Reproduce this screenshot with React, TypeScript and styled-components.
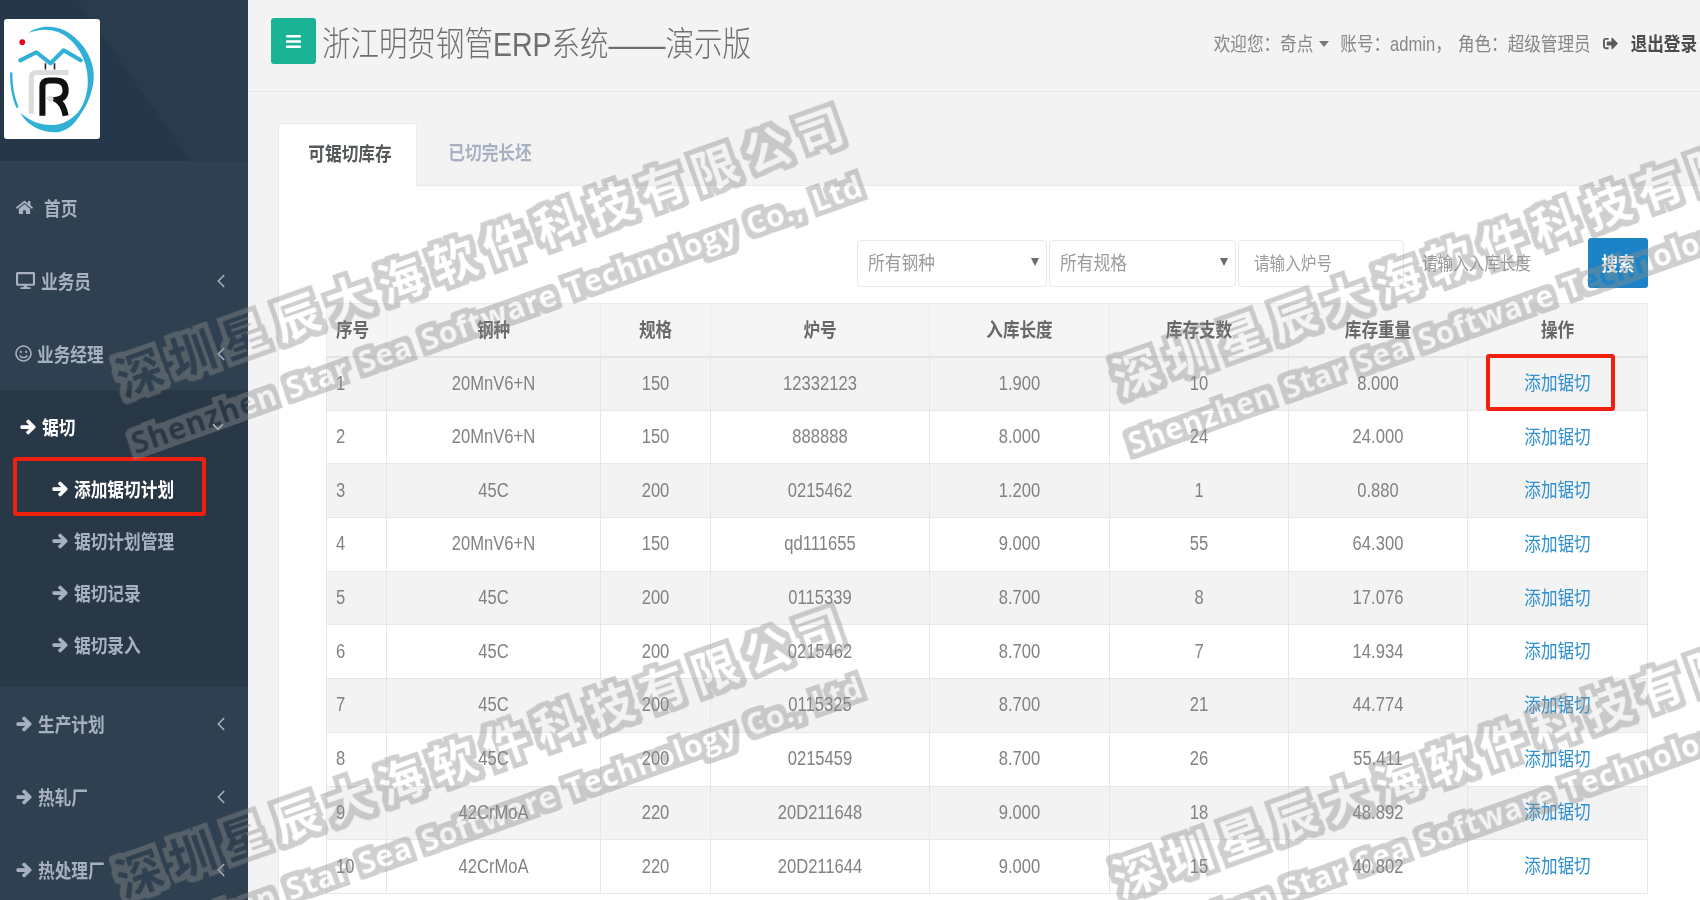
import React from "react";
import styled, { createGlobalStyle } from "styled-components";
import { FaHome, FaDesktop, FaRegSmile, FaArrowRight, FaBars, FaSignOutAlt } from "react-icons/fa";
import { ChevronLeft, ChevronDown } from "lucide-react";

const Global = createGlobalStyle`
  html, body { margin: 0; padding: 0; background: #f3f3f4; overflow: hidden; }
  body { font-family: "Liberation Sans", "Noto Sans CJK SC", sans-serif; color: #676a6c; }
  * { box-sizing: border-box; }
`;

const Page = styled.div`
  position: relative;
  display: flex;
  width: 1700px;
  height: 900px;
  overflow: hidden;
`;

const Txt = styled.span`
  display: inline-block;
  transform: scaleY(1.18);
  white-space: nowrap;
`;

/* Sidebar */
const Sidebar = styled.aside`
  flex: 0 0 248px;
  height: 900px;
  overflow: hidden;
  background: #2f4050;
  display: flex;
  flex-direction: column;
`;
const NavHeader = styled.div`
  height: 161px;
  flex: none;
  padding: 19px 0 0 4px;
  background: linear-gradient(55deg, #26374a 0 52.8%, #2a3c4c 52.8% 100%);
`;
const LogoBox = styled.div`
  width: 96px;
  height: 120px;
  background: #fff;
  border-radius: 3px;
`;
const Nav = styled.nav`
  padding-top: 10px;
  display: flex;
  flex-direction: column;
  flex: none;
`;
const NavItem = styled.div<{ $pad: number; $gap: number; $icon?: number }>`
  height: 73px;
  flex: none;
  display: flex;
  align-items: center;
  gap: ${(p) => p.$gap}px;
  padding-left: ${(p) => p.$pad}px;
  padding-right: 19px;
  color: #a7b1c2;
  font-size: 16.7px;
  font-weight: 700;
  svg { font-size: ${(p) => p.$icon ?? 17}px; flex: none; }
`;
const Chevron = styled.span<{ $down?: boolean }>`
  margin-left: auto;
  margin-right: ${(p) => (p.$down ? 0 : -3)}px;
  display: flex;
  color: ${(p) => (p.$down ? "#c9ced6" : "#a7b1c2")};
`;
const ChunkyArrow = styled(FaArrowRight)`
  stroke: currentColor;
  stroke-width: 40px;
`;
const ActiveGroup = styled.div`
  background: #293846;
  padding-bottom: 16px;
  flex: none;
`;
const ActiveHead = styled.div`
  height: 73px;
  display: flex;
  align-items: center;
  gap: 6px;
  padding: 0 21px 0 20px;
  color: #fff;
  font-size: 16.7px;
  font-weight: 700;
  svg { font-size: 16px; flex: none; }
`;
const SubItem = styled.div<{ $active?: boolean }>`
  position: relative;
  height: 52px;
  display: flex;
  align-items: center;
  gap: 6px;
  padding-left: 52px;
  color: ${(p) => (p.$active ? "#fff" : "#a7b1c2")};
  font-size: 16.7px;
  font-weight: 700;
  svg { font-size: 16px; flex: none; }
`;
const SideMark = styled.span`
  position: absolute;
  left: 13px;
  top: -6px;
  width: 193px;
  height: 59px;
  border: 4px solid #f0200f;
  border-radius: 3px;
`;

/* Main */
const Main = styled.main`
  flex: 1;
  min-width: 0;
  display: flex;
  flex-direction: column;
`;
const TopBar = styled.header`
  height: 92px;
  flex: none;
  border-bottom: 1px solid #e7eaec;
  display: flex;
  align-items: flex-start;
  padding: 18px 3px 0 23px;
`;
const MenuButton = styled.button`
  width: 45px;
  height: 46px;
  border: 0;
  border-radius: 3px;
  background: #1ab394;
  color: #fff;
  font-size: 17px;
  display: flex;
  align-items: center;
  justify-content: center;
  padding: 0;
`;
const Title = styled.h1`
  margin: 0 0 0 6px;
  height: 46px;
  display: flex;
  align-items: center;
  font-size: 28.5px;
  font-weight: 300;
  color: #6d6f71;
`;
const UserInfo = styled.div`
  margin-left: auto;
  height: 50px;
  display: flex;
  align-items: center;
  font-size: 16.6px;
  color: #85878a;
  gap: 6px;
  svg { flex: none; }
`;
const Caret = styled.i`
  width: 0;
  height: 0;
  border-left: 5px solid transparent;
  border-right: 5px solid transparent;
  border-top: 6px solid #787a7c;
  margin: 2px 5px 0 0;
`;
const LogoutIcon = styled.span`
  display: flex;
  color: #5a5c5e;
  font-size: 15px;
  margin: 0 7px 0 6px;
`;
const Logout = styled.span`
  font-weight: 700;
  color: #4a4c4e;
`;

const Content = styled.div`
  flex: 1;
  padding: 31px 0 0 30px;
  display: flex;
  flex-direction: column;
`;
const Tabs = styled.div`
  height: 63px;
  flex: none;
  display: flex;
  border-bottom: 1px solid #e7eaec;
`;
const Tab = styled.div<{ $active?: boolean }>`
  height: ${(p) => (p.$active ? 63 : 62)}px;
  width: ${(p) => (p.$active ? 139 : 146)}px;
  display: flex;
  align-items: center;
  justify-content: center;
  padding: ${(p) => (p.$active ? "0 0 5px 5px" : "0 0 4px")};
  font-size: 16.7px;
  font-weight: 700;
  color: ${(p) => (p.$active ? "#55585a" : "#a7b1c2")};
  background: ${(p) => (p.$active ? "#fff" : "transparent")};
  border: ${(p) => (p.$active ? "1px solid #e7eaec" : "0")};
  border-bottom: 0;
  border-radius: 4px 4px 0 0;
`;
const Panel = styled.section`
  flex: 1;
  background: #fff;
  border-left: 1px solid #e7eaec;
  padding: 52px 52px 0 47px;
`;
const Toolbar = styled.div`
  display: flex;
  justify-content: flex-end;
  align-items: center;
  height: 50px;
  margin-bottom: 15px;
`;
const Field = styled.div<{ $w: number; $bare?: boolean; $select?: boolean }>`
  width: ${(p) => p.$w}px;
  height: 47px;
  margin-right: 2px;
  border: 1px solid ${(p) => (p.$bare ? "transparent" : "#e9e9e9")};
  border-radius: 4px;
  display: flex;
  align-items: center;
  padding: 0 7px 3px ${(p) => (p.$select ? 10 : 15)}px;
  font-size: ${(p) => (p.$select ? 16.8 : 15.6)}px;
  color: #9a9c9e;
  background: #fff;
`;
const Arrow = styled.i`
  margin-left: auto;
  width: 0;
  height: 0;
  border-left: 4px solid transparent;
  border-right: 4px solid transparent;
  border-top: 8px solid #6a6a6a;
`;
const SearchButton = styled.button`
  width: 60px;
  height: 50px;
  margin-left: 8px;
  border: 0;
  border-radius: 3px;
  background: #1c84c6;
  color: #fff;
  font-family: inherit;
  font-size: 16.5px;
  font-weight: 700;
  padding: 0;
`;
const Table = styled.table`
  width: 1321px;
  table-layout: fixed;
  border-collapse: collapse;
  font-size: 16.6px;
`;
const Th = styled.th<{ $left?: boolean }>`
  height: 53px;
  background: #f5f5f6;
  border: 1px solid #ececec;
  border-bottom: 2px solid #e4e4e4;
  font-weight: 700;
  color: #66686a;
  text-align: ${(p) => (p.$left ? "left" : "center")};
  padding: 0 0 2px ${(p) => (p.$left ? 9 : 0)}px;
`;
const Tr = styled.tr<{ $odd: boolean }>`
  background: ${(p) => (p.$odd ? "#f3f3f3" : "#fff")};
`;
const Td = styled.td<{ $left?: boolean }>`
  height: 53.7px;
  border: 1px solid #e7e7e7;
  color: #808284;
  text-align: ${(p) => (p.$left ? "left" : "center")};
  padding: 0 0 0 ${(p) => (p.$left ? 9 : 0)}px;
`;
const ActionTd = styled.td`
  position: relative;
  height: 53.7px;
  border: 1px solid #e7e7e7;
  text-align: center;
  padding: 0 0 3px;
`;
const Link = styled.a`
  color: #2f8fd0;
`;
const CellMark = styled.span`
  position: absolute;
  left: 18px;
  top: -4px;
  width: 129px;
  height: 57px;
  border: 4px solid #f0200f;
  border-radius: 3px;
`;

/* Watermark */
const FilterDefs = styled.svg`
  position: absolute;
  width: 0;
  height: 0;
`;
const Watermark = styled.div<{ $x: number; $y: number }>`
  position: absolute;
  left: ${(p) => p.$x}px;
  top: ${(p) => p.$y}px;
  transform: rotate(-19.6deg);
  transform-origin: 0 0;
  pointer-events: none;
  white-space: nowrap;
  font-weight: 700;
  color: #000;
  filter: url(#wm-halo);
`;
const WmCn = styled.div`
  height: 60px;
  line-height: 60px;
  padding-left: 20px;
  font-size: 46px;
  letter-spacing: 9.5px;
  font-family: "Noto Sans CJK SC", sans-serif;
`;
const WmEn = styled.div`
  height: 45px;
  line-height: 45px;
  margin-top: 15px;
  padding-left: 12px;
  font-size: 30px;
  letter-spacing: 0.9px;
  word-spacing: 3px;
  font-family: "Open Sans", sans-serif;
`;

const cols = [60, 214, 110, 219, 180, 179, 179, 180];
const heads = ["序号", "钢种", "规格", "炉号", "入库长度", "库存支数", "库存重量", "操作"];
const rows = [
  ["1", "20MnV6+N", "150", "12332123", "1.900", "10", "8.000"],
  ["2", "20MnV6+N", "150", "888888", "8.000", "24", "24.000"],
  ["3", "45C", "200", "0215462", "1.200", "1", "0.880"],
  ["4", "20MnV6+N", "150", "qd111655", "9.000", "55", "64.300"],
  ["5", "45C", "200", "0115339", "8.700", "8", "17.076"],
  ["6", "45C", "200", "0215462", "8.700", "7", "14.934"],
  ["7", "45C", "200", "0115325", "8.700", "21", "44.774"],
  ["8", "45C", "200", "0215459", "8.700", "26", "55.411"],
  ["9", "42CrMoA", "220", "20D211648", "9.000", "18", "48.892"],
  ["10", "42CrMoA", "220", "20D211644", "9.000", "15", "40.802"],
];
const marks: [number, number][] = [[88, 356], [1085, 356], [88, 857], [1085, 857]];

const Logo = () => (
  <svg width="96" height="120" viewBox="0 0 95 119" fill="none">
    <path d="M24 14 C34 6 52 5 66 15 C84 28 92 48 88 66 C84 88 70 106 52 113 C72 100 82 84 83 64 C84 44 74 24 58 15 C46 9 34 10 24 14Z" fill="#2fb0d6" />
    <path d="M7 54 C7 68 9 78 13 87" stroke="#2fb0d6" strokeWidth="2.4" strokeLinecap="round" />
    <path d="M16 93 C24 108 42 114 54 112 C66 110 76 98 80 84 C72 96 62 104 50 105 C38 106 26 102 16 93Z" fill="#2fb0d6" />
    <circle cx="18" cy="23" r="2.8" fill="#e8001c" />
    <path d="M16 41 L32 33 L46 44 L59 31 L76 41" stroke="#2fb0d6" strokeWidth="4" strokeLinejoin="round" strokeLinecap="round" />
    <path d="M41 44 V50 M50 44 V50" stroke="#222" strokeWidth="1.6" />
    <path d="M27 94 V58 Q27 53 32 53 H64" stroke="#dcdcdc" strokeWidth="5" />
    <path d="M38 96 V67 Q38 61 45 61 H51 Q61 61 61 71 Q61 79 52 80 Q59 84 61 96" stroke="#111" strokeWidth="6" />
    <circle cx="46" cy="79" r="3" fill="#dcdcdc" />
  </svg>
);

const Left = () => <Chevron><ChevronLeft size={22} strokeWidth={1.8} /></Chevron>;

export default function App() {
  return (
    <Page>
      <Global />
      <FilterDefs aria-hidden="true">
        <filter id="wm-halo" colorInterpolationFilters="sRGB">
          <feMorphology in="SourceAlpha" operator="dilate" radius="4.5" result="grown" />
          <feComposite in="grown" in2="SourceAlpha" operator="out" result="ring" />
          <feGaussianBlur in="ring" stdDeviation="0.7" result="soft" />
          <feFlood floodColor="#8c8c8c" floodOpacity="0.42" />
          <feComposite in2="soft" operator="in" />
        </filter>
      </FilterDefs>
      <Sidebar>
        <NavHeader>
          <LogoBox><Logo /></LogoBox>
        </NavHeader>
        <Nav>
          <NavItem $pad={16} $gap={11}><FaHome /><Txt>首页</Txt></NavItem>
          <NavItem $pad={16} $gap={6} $icon={19}><FaDesktop /><Txt>业务员</Txt><Left /></NavItem>
          <NavItem $pad={15} $gap={5}><FaRegSmile /><Txt>业务经理</Txt><Left /></NavItem>
          <ActiveGroup>
            <ActiveHead><ChunkyArrow /><Txt>锯切</Txt><Chevron $down><ChevronDown size={18} strokeWidth={2} /></Chevron></ActiveHead>
            <SubItem $active><SideMark /><ChunkyArrow /><Txt>添加锯切计划</Txt></SubItem>
            <SubItem><ChunkyArrow /><Txt>锯切计划管理</Txt></SubItem>
            <SubItem><ChunkyArrow /><Txt>锯切记录</Txt></SubItem>
            <SubItem><ChunkyArrow /><Txt>锯切录入</Txt></SubItem>
          </ActiveGroup>
          <NavItem $pad={16} $gap={6} $icon={16}><ChunkyArrow /><Txt>生产计划</Txt><Left /></NavItem>
          <NavItem $pad={16} $gap={6} $icon={16}><ChunkyArrow /><Txt>热轧厂</Txt><Left /></NavItem>
          <NavItem $pad={16} $gap={6} $icon={16}><ChunkyArrow /><Txt>热处理厂</Txt><Left /></NavItem>
        </Nav>
      </Sidebar>
      <Main>
        <TopBar>
          <MenuButton aria-label="菜单"><FaBars /></MenuButton>
          <Title><Txt>浙江明贺钢管ERP系统——演示版</Txt></Title>
          <UserInfo>
            <Txt>欢迎您：奇点</Txt>
            <Caret />
            <Txt>账号：admin，</Txt>
            <Txt>角色：超级管理员</Txt>
            <LogoutIcon><FaSignOutAlt /></LogoutIcon>
            <Logout><Txt>退出登录</Txt></Logout>
          </UserInfo>
        </TopBar>
        <Content>
          <Tabs>
            <Tab $active><Txt>可锯切库存</Txt></Tab>
            <Tab><Txt>已切完长坯</Txt></Tab>
          </Tabs>
          <Panel>
            <Toolbar>
              <Field $w={190} $select><Txt>所有钢种</Txt><Arrow /></Field>
              <Field $w={187} $select><Txt>所有规格</Txt><Arrow /></Field>
              <Field $w={166}><Txt>请输入炉号</Txt></Field>
              <Field $w={172} $bare><Txt>请输入入库长度</Txt></Field>
              <SearchButton><Txt>搜索</Txt></SearchButton>
            </Toolbar>
            <Table>
              <colgroup>{cols.map((c, i) => <col key={i} width={c} />)}</colgroup>
              <thead>
                <tr>{heads.map((h, i) => <Th key={h} $left={i === 0}><Txt>{h}</Txt></Th>)}</tr>
              </thead>
              <tbody>
                {rows.map((r, ri) => (
                  <Tr key={ri} $odd={ri % 2 === 0}>
                    {r.map((c, i) => <Td key={i} $left={i === 0}><Txt>{c}</Txt></Td>)}
                    <ActionTd>
                      {ri === 0 && <CellMark />}
                      <Link><Txt>添加锯切</Txt></Link>
                    </ActionTd>
                  </Tr>
                ))}
              </tbody>
            </Table>
          </Panel>
        </Content>
      </Main>
      {marks.map(([x, y]) => (
        <Watermark key={`${x}-${y}`} $x={x} $y={y}>
          <WmCn>深圳星辰大海软件科技有限公司</WmCn>
          <WmEn>Shenzhen Star Sea Software Technology Co., Ltd</WmEn>
        </Watermark>
      ))}
    </Page>
  );
}
